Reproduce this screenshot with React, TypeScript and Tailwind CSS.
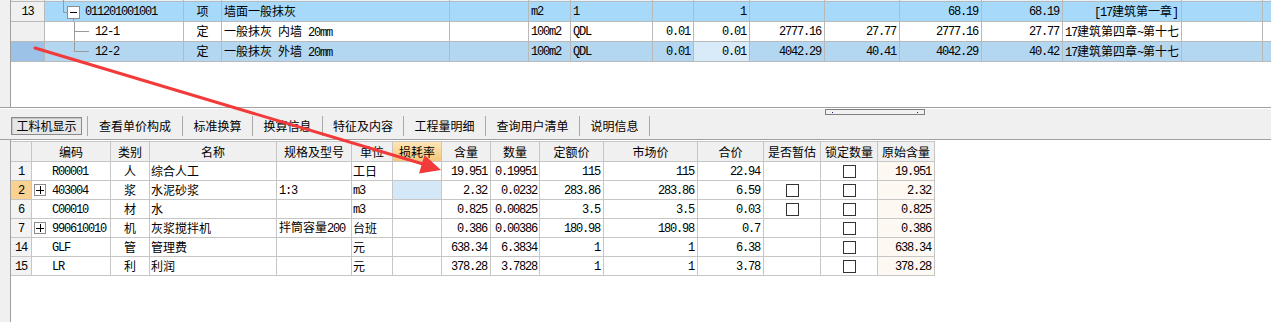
import React from 'react';

const mono = "font-['Liberation_Mono',monospace] tracking-[-1.2px]";
const cjk = "font-['Noto_Sans_CJK_SC',sans-serif]";

// split ascii / non-ascii runs so digits get the narrow mono face
function T({ s }: { s: string }) {
  const parts = s.match(/[\x00-\x7f]+|[^\x00-\x7f]+/g) ?? [];
  return (
    <span className="whitespace-pre">
      {parts.map((p, i) =>
        /^[\x00-\x7f]/.test(p) ? (
          <span key={i} className={mono}>{p}</span>
        ) : (
          <span key={i} className={cjk}>{p}</span>
        )
      )}
    </span>
  );
}

const TOP_W = ['w-[34px]', 'w-[139px]', 'w-[38px]', 'w-[228px]', 'w-[79px]', 'w-[42px]', 'w-[82px]', 'w-[41px]', 'w-[56px]', 'w-[75px]', 'w-[75px]', 'w-[82px]', 'w-[81px]', 'w-[119px]', 'w-[81px]'];
const TOP_ALIGN = ['c', 'l', 'c', 'l', 'l', 'l', 'l', 'r', 'r', 'r', 'r', 'r', 'r', 'l', 'l'];

const alignCls = (a: string) =>
  a === 'c' ? 'justify-center' : a === 'r' ? 'justify-end pr-[3px]' : 'justify-start pl-[2px]';

type TopRowData = {
  bg: string;
  headBg: string;
  cells: string[];
  tree: React.ReactNode;
  cellBg?: Record<number, string>;
  alignOverride?: Record<number, string>;
};

const treeStroke = '#9a9a9a';

const TOP_ROWS: TopRowData[] = [
  {
    bg: 'bg-[#a7dafa]',
    headBg: 'bg-[#f0f0f0]',
    cells: ['13', '011201001001', '项', '墙面一般抹灰', '', 'm2', '1', '', '1', '', '', '68.19', '68.19', '[17建筑第一章]', ''],
    alignOverride: { 13: 'r' },
    tree: (
      <svg width="40" height="19" className="shrink-0 overflow-visible">
        <line x1="18.5" y1="-3" x2="18.5" y2="10.5" stroke={treeStroke} />
        <line x1="18.5" y1="10.5" x2="22" y2="10.5" stroke={treeStroke} />
        <rect x="22.5" y="4.5" width="12" height="12" fill="white" stroke="#8c8c8c" />
        <line x1="25" y1="10.5" x2="32" y2="10.5" stroke="black" />
        <line x1="28.5" y1="17" x2="28.5" y2="21" stroke={treeStroke} />
      </svg>
    ),
  },
  {
    bg: 'bg-white',
    headBg: 'bg-[#f0f0f0]',
    cells: ['', '12-1', '定', '一般抹灰 内墙 20mm', '', '100m2', 'QDL', '0.01', '0.01', '2777.16', '27.77', '2777.16', '27.77', '17建筑第四章~第十七', ''],
    tree: (
      <svg width="50" height="19" className="shrink-0 overflow-visible">
        <line x1="29.5" y1="-1" x2="29.5" y2="21" stroke={treeStroke} />
        <line x1="29.5" y1="9.5" x2="44" y2="9.5" stroke={treeStroke} />
      </svg>
    ),
  },
  {
    bg: 'bg-[#b3d6f1]',
    headBg: 'bg-[#9cc2e8]',
    cells: ['', '12-2', '定', '一般抹灰 外墙 20mm', '', '100m2', 'QDL', '0.01', '0.01', '4042.29', '40.41', '4042.29', '40.42', '17建筑第四章~第十七', ''],
    cellBg: { 8: 'bg-[#d9eaf9]' },
    tree: (
      <svg width="50" height="19" className="shrink-0 overflow-visible">
        <line x1="29.5" y1="-1" x2="29.5" y2="9.5" stroke={treeStroke} />
        <line x1="29.5" y1="9.5" x2="44" y2="9.5" stroke={treeStroke} />
      </svg>
    ),
  },
];

function TopRow({ row }: { row: TopRowData }) {
  return (
    <div className={`flex h-[20px] border-b border-[#b9b9b9] ${row.bg}`}>
      {TOP_W.map((w, i) => {
        const a = row.alignOverride?.[i] ?? TOP_ALIGN[i];
        const bg = i === 0 ? row.headBg : row.cellBg?.[i] ?? '';
        if (i === 1) {
          return (
            <div key={i} className={`${w} shrink-0 flex items-center border-r border-[#b9b9b9] whitespace-nowrap overflow-hidden`}>
              {row.tree}
              <T s={row.cells[i]} />
            </div>
          );
        }
        return (
          <div key={i} className={`${w} shrink-0 flex items-center border-r border-[#b9b9b9] whitespace-nowrap overflow-hidden ${alignCls(a)} ${bg}`}>
            <T s={row.cells[i]} />
          </div>
        );
      })}
      <div className="flex-1" />
    </div>
  );
}

function TopPane() {
  return (
    <div className="flex h-[108px] border-b border-[#a0a0a0]">
      <div className="w-[11px] shrink-0 bg-[#f0f0f0] border-r border-[#a0a0a0]" />
      <div className="flex-1 bg-white flex flex-col">
        <div className="flex h-[2px] border-b border-[#b9b9b9] bg-[#e3f2fc]">
          {TOP_W.map((w, i) => (
            <div key={i} className={`${w} shrink-0 border-r border-[#b9b9b9] relative ${i === 0 ? 'bg-[#f0f0f0]' : ''}`}>
              {i === 1 && <div className="absolute left-[18px] top-0 w-px h-[2px] bg-[#9a9a9a]" />}
            </div>
          ))}
        </div>
        {TOP_ROWS.map((r, i) => (
          <TopRow key={i} row={r} />
        ))}
      </div>
    </div>
  );
}

const TABS: [string, string][] = [
  ['查看单价构成', 'w-[94px]'],
  ['标准换算', 'w-[69px]'],
  ['换算信息', 'w-[69px]'],
  ['特征及内容', 'w-[80px]'],
  ['工程量明细', 'w-[81px]'],
  ['查询用户清单', 'w-[93px]'],
  ['说明信息', 'w-[69px]'],
];

function TabBar() {
  return (
    <div className="h-[31px] bg-[#f0f0f0] border-b border-[#a0a0a0]">
      <div className="ml-[825px] mt-[1px] w-[100px] h-[6px] border border-[#808080] bg-[#f0f0f0] flex items-center justify-between px-[6px]">
        <div className="w-px h-px bg-[#1a1a8a]" />
        <div className="w-px h-px bg-[#1a1a8a]" />
      </div>
      <div className="mt-[1px] h-[20px] flex items-center pl-[11px] text-[12px]">
        <div className="w-[71px] h-[18px] flex items-center justify-center border border-[#8a8a8a] bg-[#e6e6e6] shadow-[inset_1px_1px_0_#c8c8c8]">
          <span className={cjk}>工料机显示</span>
        </div>
        <div className="w-[5px]" />
        <div className="w-px h-[20px] bg-[#a9a9a9]" />
        {TABS.map(([t, w]) => (
          <React.Fragment key={t}>
            <div className={`${w} h-[18px] flex items-center justify-center`}>
              <span className={cjk}>{t}</span>
            </div>
            <div className="w-px h-[20px] bg-[#a9a9a9]" />
          </React.Fragment>
        ))}
      </div>
    </div>
  );
}

const BOT_W = ['w-[21px]', 'w-[79px]', 'w-[39px]', 'w-[127px]', 'w-[75px]', 'w-[41px]', 'w-[49px]', 'w-[49px]', 'w-[49px]', 'w-[64px]', 'w-[94px]', 'w-[66px]', 'w-[57px]', 'w-[57px]', 'w-[57px]'];
const HEADERS = ['', '编码', '类别', '名称', '规格及型号', '单位', '损耗率', '含量', '数量', '定额价', '市场价', '合价', '是否暂估', '锁定数量', '原始含量'];

type BotRow = {
  n: string;
  plus: boolean;
  code: string;
  type: string;
  name: string;
  spec: string;
  unit: string;
  qty: string;
  num: string;
  dp: string;
  mp: string;
  total: string;
  est: boolean;
  sel?: boolean;
  orig: string;
};

const ROWS: BotRow[] = [
  { n: '1', plus: false, code: 'R00001', type: '人', name: '综合人工', spec: '', unit: '工日', qty: '19.951', num: '0.19951', dp: '115', mp: '115', total: '22.94', est: false, orig: '19.951' },
  { n: '2', plus: true, code: '403004', type: '浆', name: '水泥砂浆', spec: '1:3', unit: 'm3', qty: '2.32', num: '0.0232', dp: '283.86', mp: '283.86', total: '6.59', est: true, sel: true, orig: '2.32' },
  { n: '6', plus: false, code: 'C00010', type: '材', name: '水', spec: '', unit: 'm3', qty: '0.825', num: '0.00825', dp: '3.5', mp: '3.5', total: '0.03', est: true, orig: '0.825' },
  { n: '7', plus: true, code: '990610010', type: '机', name: '灰浆搅拌机', spec: '拌筒容量200', unit: '台班', qty: '0.386', num: '0.00386', dp: '180.98', mp: '180.98', total: '0.7', est: false, orig: '0.386' },
  { n: '14', plus: false, code: 'GLF', type: '管', name: '管理费', spec: '', unit: '元', qty: '638.34', num: '6.3834', dp: '1', mp: '1', total: '6.38', est: false, orig: '638.34' },
  { n: '15', plus: false, code: 'LR', type: '利', name: '利润', spec: '', unit: '元', qty: '378.28', num: '3.7828', dp: '1', mp: '1', total: '3.78', est: false, orig: '378.28' },
];

const cellBase = 'shrink-0 flex items-center border-r border-[#c6c6c6] whitespace-nowrap overflow-hidden';

function Check() {
  return <div className="w-[13px] h-[13px] border border-[#333] bg-white" />;
}

function BottomTable() {
  return (
    <div className="mt-[1px] w-fit border-t border-[#c6c6c6] text-[12px]">
      <div className="flex h-[20px] border-b border-[#c6c6c6]">
        {HEADERS.map((h, i) => (
          <div
            key={i}
            className={`${BOT_W[i]} ${cellBase} justify-center ${i === 6 ? 'bg-gradient-to-b from-[#fde6b6] to-[#f5c67a]' : 'bg-[#f0f0f0]'}`}
          >
            <span className={cjk}>{h}</span>
          </div>
        ))}
      </div>
      {ROWS.map((r) => (
        <div key={r.n} className="flex h-[19px] border-b border-[#c6c6c6] bg-white">
          <div className={`${BOT_W[0]} ${cellBase} justify-center ${r.sel ? 'bg-[#f9d291]' : 'bg-[#f3f3f3]'}`}>
            <T s={r.n} />
          </div>
          <div className={`${BOT_W[1]} ${cellBase} ${r.plus ? 'pl-[2px]' : 'pl-[20px]'}`}>
            {r.plus && (
              <div className="w-[12px] h-[12px] mr-[6px] border border-[#8c8c8c] flex items-center justify-center relative">
                <div className="absolute w-[8px] h-px bg-black" />
                <div className="absolute w-px h-[8px] bg-black" />
              </div>
            )}
            <T s={r.code} />
          </div>
          <div className={`${BOT_W[2]} ${cellBase} justify-center`}><T s={r.type} /></div>
          <div className={`${BOT_W[3]} ${cellBase} pl-[1px]`}><T s={r.name} /></div>
          <div className={`${BOT_W[4]} ${cellBase} pl-[2px]`}><T s={r.spec} /></div>
          <div className={`${BOT_W[5]} ${cellBase} pl-[1px]`}><T s={r.unit} /></div>
          <div className={`${BOT_W[6]} ${cellBase} ${r.sel ? 'bg-[#d5e8f8]' : ''}`} />
          <div className={`${BOT_W[7]} ${cellBase} justify-end pr-[3px]`}><T s={r.qty} /></div>
          <div className={`${BOT_W[8]} ${cellBase} justify-end pr-[2px]`}><T s={r.num} /></div>
          <div className={`${BOT_W[9]} ${cellBase} justify-end pr-[3px]`}><T s={r.dp} /></div>
          <div className={`${BOT_W[10]} ${cellBase} justify-end pr-[3px]`}><T s={r.mp} /></div>
          <div className={`${BOT_W[11]} ${cellBase} justify-end pr-[3px]`}><T s={r.total} /></div>
          <div className={`${BOT_W[12]} ${cellBase} justify-center`}>{r.est && <Check />}</div>
          <div className={`${BOT_W[13]} ${cellBase} justify-center`}><Check /></div>
          <div className={`${BOT_W[14]} ${cellBase} justify-end pr-[3px] bg-[#fdf8f2]`}><T s={r.orig} /></div>
        </div>
      ))}
    </div>
  );
}

function BottomPane() {
  return (
    <div className="flex h-[183px]">
      <div className="w-[10px] shrink-0 bg-[#f0f0f0]" />
      <div className="flex-1 bg-white border-l border-[#a0a0a0]">
        <BottomTable />
      </div>
    </div>
  );
}

function Arrow() {
  return (
    <svg className="absolute inset-0 pointer-events-none" width="1271" height="322">
      <line x1="35" y1="48" x2="423" y2="164" stroke="#f23a3a" strokeWidth="3" strokeLinecap="round" />
      <polygon points="441,170 419,173.5 424.5,155" fill="#f23a3a" />
    </svg>
  );
}

export default function App() {
  return (
    <div className="relative w-[1271px] h-[322px] overflow-hidden bg-white text-black text-[12px] leading-none">
      <TopPane />
      <TabBar />
      <BottomPane />
      <Arrow />
    </div>
  );
}
